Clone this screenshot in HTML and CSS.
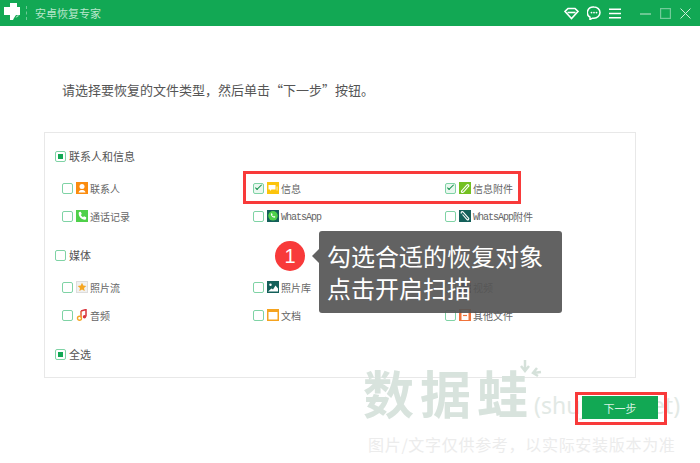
FILE: index.html
```html
<!DOCTYPE html>
<html lang="zh-CN">

<head>
    <meta charset="UTF-8">
    <meta name="viewport" content="width=device-width, initial-scale=1.0">
    <title>安卓恢复专家</title>
    <link rel="stylesheet" href="styles.css">
</head>

<body>
    <div class="titlebar">
        <svg class="logo" width="18" height="18" viewBox="0 0 18 18">
            <path d="M6 0h7v4h3v8h-4l-2 3-1 2H6v-5H0V4h6z" fill="#fff" />
            <path d="M11.500 15l1.500-2.500h2.500z" fill="#bfe8d0" />
        </svg>
        <span class="title-divider"></span>
        <span class="title">安卓恢复专家</span>
        <div class="title-tools">
            <svg width="15" height="13" viewBox="0 0 15 13" fill="none" stroke="#fff" stroke-width="1.600">
                <path d="M4 1.500h7l3 3-6.500 7L1 4.500z" />
                <path d="M3.500 5.500h8" />
            </svg>
            <svg width="14" height="14" viewBox="0 0 14 14">
                <path d="M7 1a6 5.600 0 0 1 0 11.200H5.500L3 13.500v-2.300A6 5.600 0 0 1 7 1z" fill="none" stroke="#fff" stroke-width="1.500" />
                <circle cx="4.500" cy="6.600" r="0.900" fill="#fff" />
                <circle cx="7" cy="6.600" r="0.900" fill="#fff" />
                <circle cx="9.500" cy="6.600" r="0.900" fill="#fff" />
            </svg>
            <svg width="12" height="11" viewBox="0 0 12 11" stroke="#fff" stroke-width="1.500">
                <path d="M0 1.200h12M0 5.500h12M0 9.800h12" />
            </svg>
        </div>
        <div class="window-tools">
            <svg width="11" height="11" viewBox="0 0 11 11" stroke="#a5dcbc" stroke-width="1.200">
                <path d="M0 6h11" />
            </svg>
            <svg width="11" height="11" viewBox="0 0 11 11" fill="none" stroke="#72cb99" stroke-width="1.200">
                <rect x="0.600" y="0.600" width="9.800" height="9.800" />
            </svg>
            <svg width="11" height="11" viewBox="0 0 11 11" stroke="#cdeeda" stroke-width="1">
                <path d="M0.500 0.500l10 10M10.500 0.500l-10 10" />
            </svg>
        </div>
    </div>

    <p class="intro">请选择要恢复的文件类型，然后单击“下一步”按钮。</p>

    <div class="panel">
        <div class="group-head"><span class="cb mixed"></span>联系人和信息</div>
        <div class="items">
            <div class="item"><span class="cb"></span>
                <svg class="icon" viewBox="0 0 12 12">
                    <rect width="12" height="12" fill="#fb8c0e" />
                    <circle cx="6" cy="4.500" r="2.500" fill="#fff" />
                    <path d="M2.500 10.500c.5-2 2-2.500 3.500-2.500s3 .5 3.500 2.500z" fill="#fff" />
                </svg>
                联系人</div>
            <div class="item"><span class="cb checked"></span>
                <svg class="icon" viewBox="0 0 12 12">
                    <rect width="12" height="12" fill="#fcc40c" />
                    <path d="M1.500 3h7v4.500h-4L3 9V7.500H1.500z" fill="#fff" />
                    <path d="M9.500 4.500h1.200v4H9.500z" fill="#ffe9a6" />
                </svg>
                信息</div>
            <div class="item"><span class="cb checked"></span>
                <svg class="icon" viewBox="0 0 12 12">
                    <rect width="12" height="12" fill="#74c021" />
                    <path d="M3 8.500l5-5.500c1-1 2.500.500 1.500 1.500L4.500 10C3 11 1.500 9.500 3 8.500z" fill="none" stroke="#fff" stroke-width="1.100" />
                </svg>
                信息附件</div>
            <div class="item"><span class="cb"></span>
                <svg class="icon" viewBox="0 0 12 12">
                    <rect width="12" height="12" fill="#4fd04a" />
                    <path d="M3 2l1.800-.3 1 2.300-1 1c.5 1 1.300 1.800 2.200 2.200l1-1 2.200 1L10 9.500C6 10.500 1.500 6 3 2z" fill="#fff" />
                </svg>
                通话记录</div>
            <div class="item"><span class="cb"></span>
                <svg class="icon" viewBox="0 0 12 12">
                    <rect width="12" height="12" fill="#14605a" />
                    <circle cx="6" cy="5.800" r="4.800" fill="#4fd04a" />
                    <path d="M4 3.500l1-.2.600 1.400-.5.600c.3.500.7.900 1.200 1.200l.6-.5 1.400.6-.2 1C6 8.200 3.500 5.700 4 3.500z" fill="#fff" />
                </svg>
                <span class="latin">WhatsApp</span></div>
            <div class="item"><span class="cb"></span>
                <svg class="icon" viewBox="0 0 12 12">
                    <rect width="12" height="12" fill="#14605a" />
                    <path d="M2.500 3.500c-1-1 .5-2.500 1.500-1.500l5.500 6c1 1-.5 2.500-1.500 1.500L3.500 4.500" fill="none" stroke="#fff" stroke-width="1.100" />
                </svg>
                <span class="latin">WhatsApp</span>附件</div>
        </div>

        <div class="group-head"><span class="cb"></span>媒体</div>
        <div class="items">
            <div class="item"><span class="cb"></span>
                <svg class="icon" viewBox="0 0 12 12">
                    <rect x="0.500" y="0.500" width="11" height="11" fill="#f1f1f1" stroke="#ddd" />
                    <path d="M6 1.800l1.300 2.800 3 .3-2.300 2 .7 3L6 8.400l-2.700 1.500.7-3-2.300-2 3-.3z" fill="#f5a623" />
                </svg>
                照片流</div>
            <div class="item"><span class="cb"></span>
                <svg class="icon" viewBox="0 0 12 12">
                    <rect width="12" height="12" fill="#14605a" />
                    <circle cx="3.500" cy="3.800" r="1.200" fill="#fff" />
                    <path d="M1 10.500l3.500-3 1.500 1 2.500-4 2.500 3v3z" fill="#fff" />
                </svg>
                照片库</div>
            <div class="item"><span class="cb"></span>
                <svg class="icon" viewBox="0 0 12 12">
                    <rect width="12" height="12" fill="#3c3a78" />
                    <path d="M2 0v12M10 0v12M0 3h2M0 6h2M0 9h2M10 3h2M10 6h2M10 9h2" stroke="#fff" stroke-width="0.800" />
                </svg>
                视频</div>
            <div class="item"><span class="cb"></span>
                <svg class="icon" viewBox="0 0 12 12">
                    <path d="M5 2l5-1.500v7" fill="none" stroke="#d9363e" stroke-width="1.500" />
                    <path d="M5 2v6.500" fill="none" stroke="#e5603a" stroke-width="1.500" />
                    <circle cx="3.500" cy="9.300" r="2" fill="none" stroke="#f5a623" stroke-width="1.400" />
                    <circle cx="8.500" cy="7.800" r="1.700" fill="#d9363e" />
                </svg>
                音频</div>
            <div class="item"><span class="cb"></span>
                <svg class="icon" viewBox="0 0 12 12">
                    <rect width="12" height="12" fill="#f5a31f" />
                    <rect x="1.500" y="3" width="9" height="7.500" fill="#fff" />
                </svg>
                文档</div>
            <div class="item"><span class="cb"></span>
                <svg class="icon" viewBox="0 0 12 12">
                    <rect width="12" height="12" fill="#f0733a" />
                    <rect x="2.500" y="1" width="7" height="10" fill="#fff" />
                    <path d="M4 6.500h4" stroke="#f0733a" stroke-width="1.200" />
                </svg>
                其他文件</div>
        </div>

        <div class="group-head"><span class="cb mixed"></span>全选</div>
    </div>

    <div class="footer">
        <button class="next-btn">下一步</button>
    </div>

    <div class="watermark">
        <svg class="wm-leaf" width="24" height="20" viewBox="0 0 24 20" fill="none" stroke="#d5e1da" stroke-width="2.500">
            <path d="M6 0v11M2 6l4 5 4-5" />
            <path d="M14 13l8-1M18 8l-4 5 5 3" />
        </svg>
        <div class="wm-name">数据蛙<span class="wm-site">(shujuwa.net)</span></div>
        <div class="wm-note">图片/文字仅供参考，以实际安装版本为准</div>
    </div>

    <div class="mark mark-row"></div>
    <div class="mark mark-btn"></div>

    <div class="step-num">1</div>
    <div class="tip">勾选合适的恢复对象<br>点击开启扫描</div>
</body>

</html>
```

FILE: styles.css
```css
body {
    position: relative;
    width: 700px;
    height: 463px;
    margin: 0;
    overflow: hidden;
    font-family: "Noto Sans CJK SC", "Liberation Sans", sans-serif;
    color: #666;
}

.titlebar {
    display: flex;
    align-items: center;
    height: 26px;
    padding-left: 4px;
    background: #12a854;
}

.logo {
    flex: none;
    margin-bottom: 2px;
}

.title-divider {
    height: 14px;
    margin: 0 8px 0 4px;
    border-left: 1px dashed #6cc996;
}

.title {
    font-size: 11px;
    color: #b9e6cc;
}

.title-tools {
    display: flex;
    align-items: center;
    gap: 8px;
    margin-left: auto;
}

.window-tools {
    display: flex;
    align-items: center;
    gap: 9px;
    margin: 0 9px 0 19px;
}

.intro {
    margin: 55px 0 33px 62px;
    font-size: 13px;
    line-height: 18px;
    color: #555;
}

.panel {
    box-sizing: border-box;
    width: 592px;
    height: 246px;
    margin-left: 44px;
    padding: 15px 0 0 10px;
    border: 1px solid #e8e8e8;
}

.group-head {
    display: flex;
    align-items: center;
    height: 16px;
    font-size: 11px;
    color: #555;
}

.group-head .cb {
    margin-right: 3px;
}

.items {
    display: grid;
    grid-template-columns: 191px 192px 1fr;
    grid-auto-rows: 28px;
    margin: 10px 0 17px;
    padding-left: 7px;
}

.item {
    display: flex;
    align-items: center;
    font-size: 10px;
    white-space: nowrap;
}

.latin {
    padding-top: 2px;
    font-family: "Liberation Mono", monospace;
    font-size: 10px;
    letter-spacing: -1px;
}

.icon {
    flex: none;
    width: 12px;
    height: 12px;
    margin: 0 2px 0 3px;
}

.cb {
    position: relative;
    flex: none;
    box-sizing: border-box;
    width: 11px;
    height: 11px;
    border: 1px solid #7fd3a5;
    border-radius: 2px;
}

.cb.mixed::after {
    content: "";
    position: absolute;
    top: 2px;
    left: 2px;
    width: 5px;
    height: 5px;
    background: #12a854;
}

.cb.checked {
    background: #e9f7ef;
}

.cb.checked::after {
    content: "";
    position: absolute;
    top: 1px;
    left: 1px;
    width: 6px;
    height: 2px;
    border-left: 1.5px solid #0f8f48;
    border-bottom: 1.5px solid #0f8f48;
    transform: rotate(-45deg);
}

.footer {
    display: flex;
    justify-content: flex-end;
    margin-top: 18px;
    padding-right: 42px;
}

.next-btn {
    position: relative;
    z-index: 1;
    width: 76px;
    height: 23px;
    padding: 0;
    border: none;
    background: #12a854;
    color: #d8f2e3;
    font-family: inherit;
    font-size: 11px;
}

.watermark {
    position: absolute;
    top: 360px;
    left: 363px;
    width: 337px;
}

.wm-leaf {
    position: absolute;
    top: 0;
    left: 156px;
}

.wm-name {
    font-size: 51px;
    font-weight: 700;
    line-height: 64px;
    letter-spacing: 6px;
    color: #d8e3dd;
    white-space: nowrap;
}

.wm-site {
    font-family: "Noto Sans", sans-serif;
    font-size: 23px;
    font-weight: 400;
    letter-spacing: 0;
    color: #e2e9e5;
}

.wm-note {
    margin: -5px 0 0 5px;
    font-size: 16px;
    line-height: 24px;
    letter-spacing: 0.7px;
    color: #ececec;
    white-space: nowrap;
}

.mark {
    position: absolute;
    box-sizing: border-box;
    border: 3px solid #f83a3a;
}

.mark-row {
    top: 171px;
    left: 243px;
    width: 278px;
    height: 33px;
}

.mark-btn {
    top: 392px;
    left: 575px;
    width: 92px;
    height: 33px;
}

.step-num {
    position: absolute;
    top: 241px;
    left: 275px;
    width: 30px;
    height: 30px;
    border-radius: 50%;
    background: #f83a3a;
    color: #fff;
    font-family: "Liberation Sans", sans-serif;
    font-size: 20px;
    line-height: 30px;
    text-align: center;
}

.tip {
    position: absolute;
    top: 231px;
    left: 319px;
    box-sizing: border-box;
    width: 243px;
    height: 82px;
    padding: 9px 0 0 8px;
    border-radius: 3px;
    background: rgba(85, 85, 85, 0.92);
    color: #fff;
    font-size: 24px;
    line-height: 32px;
    white-space: nowrap;
}

.tip::before {
    content: "";
    position: absolute;
    top: 18px;
    left: -7px;
    border-top: 7px solid transparent;
    border-bottom: 7px solid transparent;
    border-right: 7px solid rgba(85, 85, 85, 0.92);
}
```
